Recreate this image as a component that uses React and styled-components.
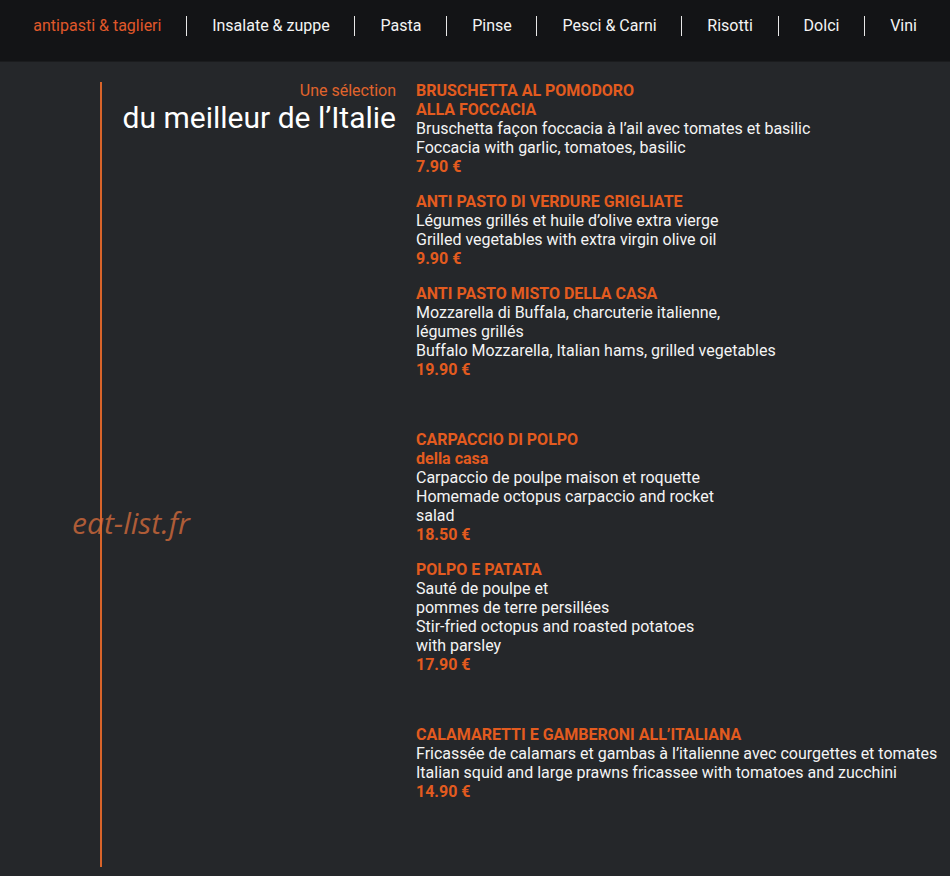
import styled, { createGlobalStyle } from "styled-components";

const ORANGE = "#e35b1f";

const GlobalStyle = createGlobalStyle`
  html, body {
    margin: 0;
    padding: 0;
    background: #25272a;
  }
  body {
    font-family: Roboto, "Liberation Sans", sans-serif;
    color: #f2f2f2;
  }
`;

const NavBar = styled.nav`
  height: 61px;
  background: #131416;
  display: flex;
  align-items: center;
  justify-content: center;
  border-bottom: 1px solid #1b1c1e;
`;

const NavList = styled.ul`
  list-style: none;
  margin: 0;
  padding: 0 0 10px;
  display: flex;
  align-items: center;
`;

const NavItem = styled.li`
  font-size: 16px;
  line-height: 20px;
  padding: 0 24.75px 0 25px;
  color: ${(p) => (p.$active ? "#e0582a" : "#f4f4f4")};

  & + & {
    border-left: 1px solid #e8e8e8;
  }
`;

const Main = styled.main`
  display: grid;
  grid-template-columns: 102px 294px 1fr;
  padding: 19px 0 9px;
  position: relative;
`;

const Rail = styled.div`
  grid-column: 1;
  display: flex;
  justify-content: flex-end;
  padding-top: 1px;

  &::after {
    content: "";
    width: 2px;
    height: 785px;
    background: #d9642a;
  }
`;

const Intro = styled.header`
  text-align: right;
`;

const Kicker = styled.div`
  color: #e0642c;
  font-size: 16px;
  line-height: 19px;
`;

const Headline = styled.h1`
  margin: 0;
  font-weight: 400;
  font-size: 30px;
  line-height: 35px;
  color: #ffffff;
`;

const Menu = styled.section`
  padding-left: 20px;
`;

const Group = styled.div`
  display: flex;
  flex-direction: column;
  gap: 16px;

  & + & {
    margin-top: 51px;
  }
`;

const Dish = styled.article`
  font-size: 16px;
  line-height: 19px;
`;

const DishName = styled.div`
  color: ${ORANGE};
  font-weight: 700;
`;

const DishText = styled.div`
  color: #f4f4f4;
`;

const Price = styled.div`
  color: ${ORANGE};
  font-weight: 700;
`;

const Watermark = styled.div`
  position: absolute;
  left: 72px;
  top: 440px;
  font-family: "Open Sans", sans-serif;
  font-style: italic;
  font-size: 30px;
  color: rgba(220, 110, 60, 0.75);
  pointer-events: none;
`;

const navLinks = [
  "antipasti & taglieri",
  "Insalate & zuppe",
  "Pasta",
  "Pinse",
  "Pesci & Carni",
  "Risotti",
  "Dolci",
  "Vini",
];

const groups = [
  [
    {
      name: ["BRUSCHETTA AL POMODORO", "ALLA FOCCACIA"],
      text: [
        "Bruschetta façon foccacia à l’ail avec tomates et basilic",
        "Foccacia with garlic, tomatoes, basilic",
      ],
      price: "7.90 €",
    },
    {
      name: ["ANTI PASTO DI VERDURE GRIGLIATE"],
      text: [
        "Légumes grillés et huile d’olive extra vierge",
        "Grilled vegetables with extra virgin olive oil",
      ],
      price: "9.90 €",
    },
    {
      name: ["ANTI PASTO MISTO DELLA CASA"],
      text: [
        "Mozzarella di Buffala, charcuterie italienne,",
        "légumes grillés",
        "Buffalo Mozzarella, Italian hams, grilled vegetables",
      ],
      price: "19.90 €",
    },
  ],
  [
    {
      name: ["CARPACCIO DI POLPO", "della casa"],
      text: [
        "Carpaccio de poulpe maison et roquette",
        "Homemade octopus carpaccio and rocket",
        "salad",
      ],
      price: "18.50 €",
    },
    {
      name: ["POLPO E PATATA"],
      text: [
        "Sauté de poulpe et",
        "pommes de terre persillées",
        "Stir-fried octopus and roasted potatoes",
        "with parsley",
      ],
      price: "17.90 €",
    },
  ],
  [
    {
      name: ["CALAMARETTI E GAMBERONI ALL’ITALIANA"],
      text: [
        "Fricassée de calamars et gambas à l’italienne avec courgettes et tomates",
        "Italian squid and large prawns fricassee with tomatoes and zucchini",
      ],
      price: "14.90 €",
    },
  ],
];

export default function App() {
  return (
    <>
      <GlobalStyle />
      <NavBar>
        <NavList>
          {navLinks.map((label, i) => (
            <NavItem key={label} $active={i === 0}>
              {label}
            </NavItem>
          ))}
        </NavList>
      </NavBar>
      <Main>
        <Rail />
        <Intro>
          <Kicker>Une sélection</Kicker>
          <Headline>du meilleur de l’Italie</Headline>
        </Intro>
        <Menu>
          {groups.map((dishes, g) => (
            <Group key={g}>
              {dishes.map((d) => (
                <Dish key={d.name[0]}>
                  {d.name.map((n) => (
                    <DishName key={n}>{n}</DishName>
                  ))}
                  {d.text.map((t) => (
                    <DishText key={t}>{t}</DishText>
                  ))}
                  <Price>{d.price}</Price>
                </Dish>
              ))}
            </Group>
          ))}
        </Menu>
        <Watermark>eat-list.fr</Watermark>
      </Main>
    </>
  );
}
